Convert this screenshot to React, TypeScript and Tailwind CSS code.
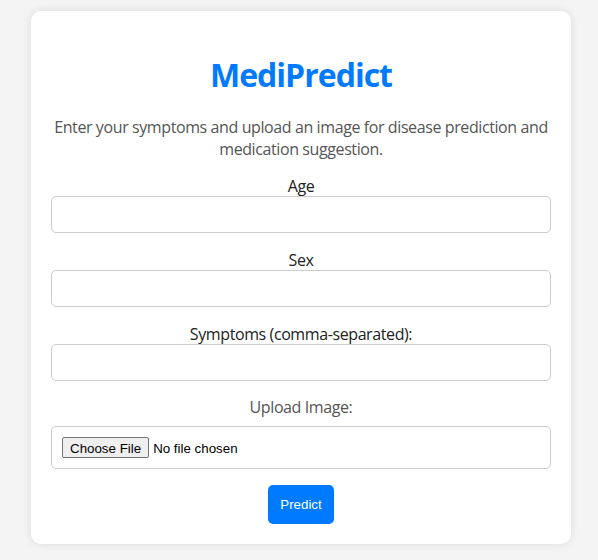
const font = { fontFamily: '"Open Sans", "Noto Sans", sans-serif' }

const Field = ({ label }: { label: string }) => (
  <>
    <label className="block text-center text-[16px] leading-[20px] tracking-[-0.4px] text-[#222]">{label}</label>
    <input
      type="text"
      className="mb-[17px] block h-[37px] w-full rounded-[5px] border border-[#ccc] bg-white px-[10px] text-[16px] outline-none"
    />
  </>
)

export default function App() {
  return (
    <div className="min-h-[560px] bg-[#f4f4f4] pt-[11px]" style={font}>
      <div className="ml-[31px] w-[540px] rounded-[10px] bg-white px-[20px] pt-[44px] pb-[20px] shadow-[0_0_10px_rgba(0,0,0,0.1)]">
        <h1 className="text-center text-[32px] leading-[40px] font-bold tracking-[-1px] text-[#007bff]">MediPredict</h1>
        <p className="mt-[21px] text-center text-[16px] leading-[22px] tracking-[-0.4px] text-[#555]">
          Enter your symptoms and upload an image for disease prediction and medication suggestion.
        </p>

        <form className="mt-[16px]" onSubmit={(e) => e.preventDefault()}>
          <Field label="Age" />
          <Field label="Sex" />
          <label className="block text-center text-[16px] leading-[20px] tracking-[-0.4px] text-[#222]">
            Symptoms (comma-separated):
          </label>
          <input
            type="text"
            className="block h-[37px] w-full rounded-[5px] border border-[#ccc] bg-white px-[10px] text-[16px] outline-none"
          />

          <label className="mt-[16px] block text-center text-[16px] leading-[20px] tracking-[-0.4px] text-[#555]">
            Upload Image:
          </label>
          <input
            type="file"
            className="mt-[9px] block h-[43px] w-full rounded-[5px] border border-[#ccc] p-[10px] font-['Liberation_Sans',Arial,sans-serif] text-[13.33px] leading-[21px] text-black file:mr-[4px] file:h-[21px] file:rounded-[2px] file:border file:border-[#767676] file:bg-[#efefef] file:px-[7px] file:text-black"
          />

          <div className="mt-[16px] flex justify-center">
            <button
              type="submit"
              className="h-[39px] rounded-[5px] bg-[#007bff] px-[12px] font-['Liberation_Sans',Arial,sans-serif] text-[13.33px] text-white"
            >
              Predict
            </button>
          </div>
        </form>
      </div>
    </div>
  )
}
